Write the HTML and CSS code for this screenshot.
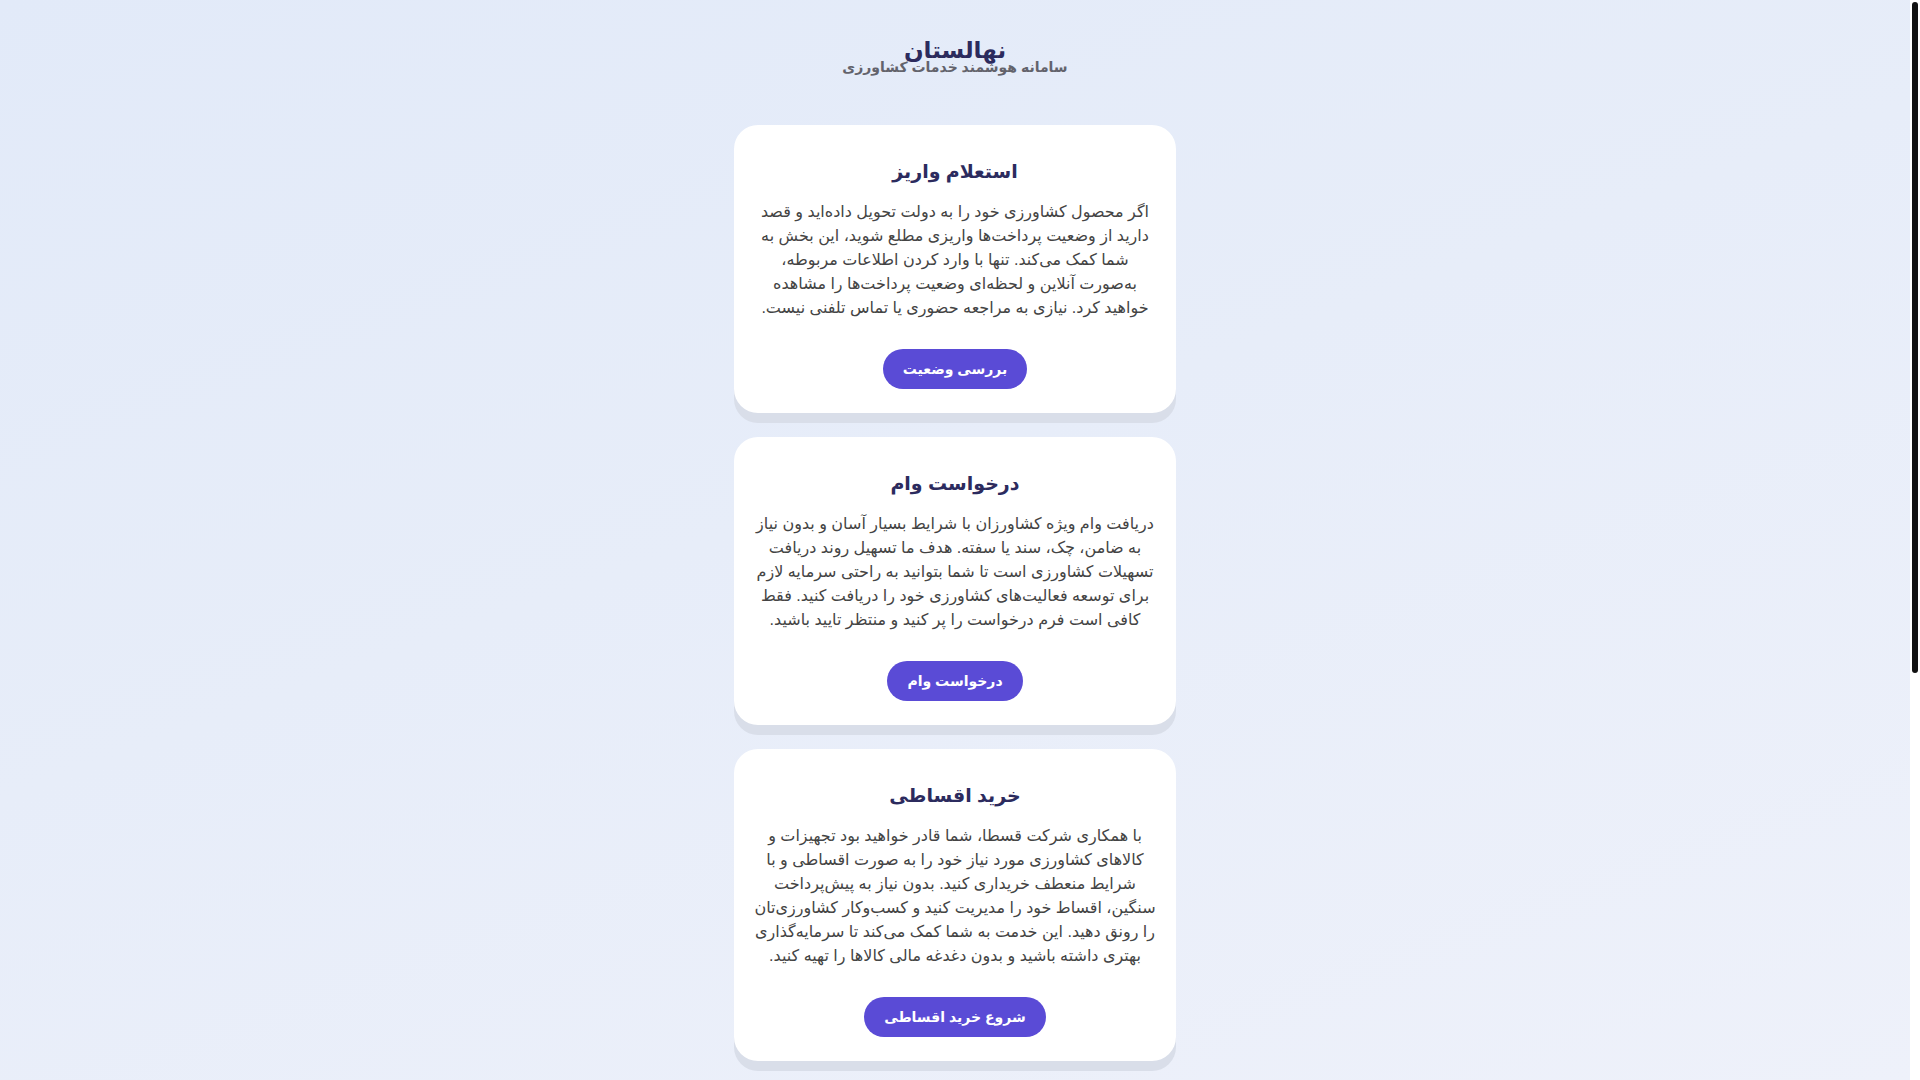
FILE: index.html
```html
<!DOCTYPE html>
<html lang="fa" dir="rtl">
<head>
<meta charset="utf-8">
<title>نهالستان</title>
<link rel="stylesheet" href="styles.css">
</head>
<body>
<div class="shell">
  <div class="page">
    <header class="site-header">
      <h1 class="brand">نهالستان</h1>
      <p class="tagline">سامانه هوشمند خدمات کشاورزی</p>
    </header>

    <main class="cards">
      <section class="card">
        <h2 class="card-title">استعلام واریز</h2>
        <p class="card-text">اگر محصول کشاورزی خود را به دولت تحویل داده‌اید و قصد دارید از وضعیت پرداخت‌ها واریزی مطلع شوید، این بخش به شما کمک می‌کند. تنها با وارد کردن اطلاعات مربوطه، به‌صورت آنلاین و لحظه‌ای وضعیت پرداخت‌ها را مشاهده خواهید کرد. نیازی به مراجعه حضوری یا تماس تلفنی نیست.</p>
        <a class="btn" href="#">بررسی وضعیت</a>
      </section>

      <section class="card">
        <h2 class="card-title">درخواست وام</h2>
        <p class="card-text">دریافت وام ویژه کشاورزان با شرایط بسیار آسان و بدون نیاز به ضامن، چک، سند یا سفته. هدف ما تسهیل روند دریافت تسهیلات کشاورزی است تا شما بتوانید به راحتی سرمایه لازم برای توسعه فعالیت‌های کشاورزی خود را دریافت کنید. فقط کافی است فرم درخواست را پر کنید و منتظر تایید باشید.</p>
        <a class="btn" href="#">درخواست وام</a>
      </section>

      <section class="card">
        <h2 class="card-title">خرید اقساطی</h2>
        <p class="card-text">با همکاری شرکت قسطا، شما قادر خواهید بود تجهیزات و کالاهای کشاورزی مورد نیاز خود را به صورت اقساطی و با شرایط منعطف خریداری کنید. بدون نیاز به پیش‌پرداخت سنگین، اقساط خود را مدیریت کنید و کسب‌وکار کشاورزی‌تان را رونق دهید. این خدمت به شما کمک می‌کند تا سرمایه‌گذاری بهتری داشته باشید و بدون دغدغه مالی کالاها را تهیه کنید.</p>
        <a class="btn" href="#">شروع خرید اقساطی</a>
      </section>
    </main>
  </div>
  <div class="scroll-track" aria-hidden="true">
    <div class="scroll-thumb"></div>
  </div>
</div>
</body>
</html>
```

FILE: styles.css
```css
html,
body {
  height: 100%;
  margin: 0;
  overflow: hidden;
}

body {
  background: linear-gradient(160deg, #e2eaf9 0%, #e7edf9 45%, #eef1fa 100%);
  font-family: "Liberation Sans", "DejaVu Sans", sans-serif;
  color: #444;
}

.shell {
  display: flex;
  direction: ltr;
  height: 100vh;
}

.page {
  flex: 1;
  min-width: 0;
  direction: rtl;
  overflow: hidden;
  display: flex;
  flex-direction: column;
  align-items: center;
  padding: 33px 20px 0;
}

.scroll-track {
  width: 10px;
  flex-shrink: 0;
  background: #ffffff;
  padding: 2px 2px 0;
  box-sizing: border-box;
}

.scroll-thumb {
  height: 671px;
  background: #111111;
  border-radius: 3px;
}

.site-header {
  display: flex;
  flex-direction: column;
  align-items: center;
  text-align: center;
  flex-shrink: 0;
}

.brand {
  margin: 0;
  font-size: 23px;
  line-height: 34px;
  font-weight: bold;
  color: #2c2b5e;
}

.tagline {
  margin: -10px 0 0;
  font-size: 14px;
  line-height: 20px;
  font-weight: bold;
  color: #63636c;
}

.cards {
  display: flex;
  flex-direction: column;
  align-items: center;
  gap: 24px;
  margin-top: 48px;
  flex-shrink: 0;
}

.card {
  box-sizing: border-box;
  width: 442px;
  padding: 33px 20px 24px;
  background: #ffffff;
  border-radius: 24px;
  box-shadow: 0 10px 0 #d9dee9;
  text-align: center;
}

.card-title {
  margin: 0 0 14px;
  font-size: 19px;
  line-height: 28px;
  font-weight: bold;
  color: #2c2b5e;
}

.card-text {
  margin: 0 0 29px;
  font-size: 16px;
  line-height: 24px;
  color: #444444;
}

.btn {
  display: inline-block;
  height: 40px;
  line-height: 40px;
  padding: 0 20px;
  border-radius: 20px;
  background: #5a4bd6;
  color: #ffffff;
  font-size: 14px;
  font-weight: bold;
  text-decoration: none;
}
```
